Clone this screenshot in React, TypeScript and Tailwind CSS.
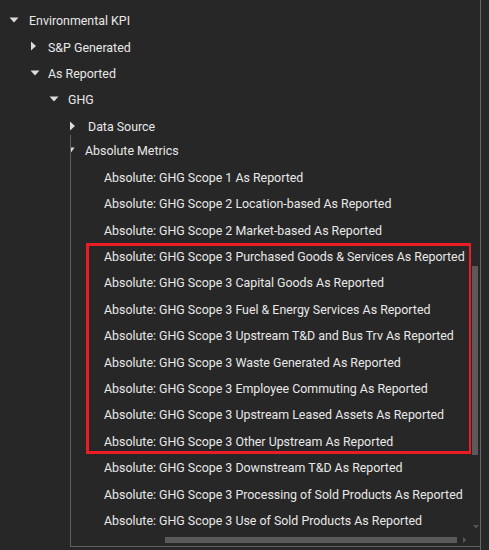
import React from "react";

const CaretDown = () => (
  <svg width="10" height="6" viewBox="0 0 10 6" className="shrink-0">
    <polygon points="0.5,0.5 9.5,0.5 5,5.5" fill="#dcdcdc" />
  </svg>
);

const CaretRight = () => (
  <svg width="10" height="10" viewBox="0 0 10 10" className="shrink-0">
    <polygon points="2,0.5 7,5 2,9.5" fill="#dcdcdc" />
  </svg>
);

const items = [
  "Absolute: GHG Scope 1 As Reported",
  "Absolute: GHG Scope 2 Location-based As Reported",
  "Absolute: GHG Scope 2 Market-based As Reported",
];
const boxed = [
  "Absolute: GHG Scope 3 Purchased Goods & Services As Reported",
  "Absolute: GHG Scope 3 Capital Goods As Reported",
  "Absolute: GHG Scope 3 Fuel & Energy Services As Reported",
  "Absolute: GHG Scope 3 Upstream T&D and Bus Trv As Reported",
  "Absolute: GHG Scope 3 Waste Generated As Reported",
  "Absolute: GHG Scope 3 Employee Commuting As Reported",
  "Absolute: GHG Scope 3 Upstream Leased Assets As Reported",
  "Absolute: GHG Scope 3 Other Upstream As Reported",
];
const after = [
  "Absolute: GHG Scope 3 Downstream T&D As Reported",
  "Absolute: GHG Scope 3 Processing of Sold Products As Reported",
  "Absolute: GHG Scope 3 Use of Sold Products As Reported",
];

const Leaf = ({ text }: { text: string }) => (
  <div className="flex h-[26.4px] shrink-0 items-center whitespace-nowrap pl-[33px] pt-[3px]">{text}</div>
);

export default function App() {
  return (
    <div className="h-[550px] w-[489px] overflow-hidden bg-[#272727] text-[12.4px] leading-none text-[#e8e8e8] [font-family:Roboto,sans-serif]">
      <div className="flex h-full w-[481px] flex-col border-r border-[#666666]">
        <div className="-mt-[19.6px] flex h-[26.4px] shrink-0 items-center whitespace-nowrap pl-[29px]">Company</div>
        <div className="flex h-[26.4px] shrink-0 items-center whitespace-nowrap pl-[9px]">
          <CaretDown />
          <span className="ml-[10px] pt-[3px]">Environmental KPI</span>
        </div>
        <div className="flex h-[26.4px] shrink-0 items-center whitespace-nowrap pl-[29px]">
          <CaretRight />
          <span className="ml-[9px] pt-[3px]">S&amp;P Generated</span>
        </div>
        <div className="flex h-[26.4px] shrink-0 items-center whitespace-nowrap pl-[30px]">
          <CaretDown />
          <span className="ml-[8px] pt-[3px]">As Reported</span>
        </div>
        <div className="flex h-[26.4px] shrink-0 items-center whitespace-nowrap pl-[49px]">
          <CaretDown />
          <span className="ml-[9px] pt-[3px]">GHG</span>
        </div>
        <div className="flex h-[22.6px] shrink-0 items-center whitespace-nowrap pl-[68px] pt-[4.6px]">
          <CaretRight />
          <span className="ml-[10px] pt-[3px]">Data Source</span>
        </div>
        <div className="ml-[70px] flex h-[412px] shrink-0 flex-col overflow-hidden border-b border-l border-[#5e5e5e]">
          <div className="flex min-h-0 flex-1">
            <div className="flex min-w-0 flex-1 flex-col overflow-hidden pt-[2px]">
              <div className="flex h-[26.4px] shrink-0 items-center whitespace-nowrap">
                <svg width="4" height="6" viewBox="0 0 4 6" className="shrink-0">
                  <polygon points="0,0.5 3.6,0.5 0,5.5" fill="#dcdcdc" />
                </svg>
                <span className="ml-[10px] pt-[3px]">Absolute Metrics</span>
              </div>
              {items.map((t) => (
                <Leaf key={t} text={t} />
              ))}
              <div className="relative flex shrink-0 flex-col">
                {boxed.map((t) => (
                  <Leaf key={t} text={t} />
                ))}
                <div className="pointer-events-none absolute inset-y-0 left-[15px] w-[386px] border-[3px] border-[#ec1c24]" />
              </div>
              {after.map((t) => (
                <Leaf key={t} text={t} />
              ))}
            </div>
            <div className="flex w-[9px] shrink-0 flex-col">
              <div className="ml-[1px] mt-[131px] h-[189px] w-[6px] bg-[#5a5a5a]" />
              <div className="mt-auto mb-[4px] flex justify-center">
                <svg width="6" height="4" viewBox="0 0 6 4">
                  <polygon points="0,0 6,0 3,3.5" fill="#555555" />
                </svg>
              </div>
            </div>
          </div>
          <div className="flex h-[13px] shrink-0 items-start pt-[4px]">
            <div className="ml-[94px] h-[6px] w-[292px] bg-[#5a5a5a]" />
            <svg width="4" height="6" viewBox="0 0 4 6" className="ml-[6px]">
              <polygon points="0,0 3.5,3 0,6" fill="#555555" />
            </svg>
          </div>
        </div>
      </div>
    </div>
  );
}
